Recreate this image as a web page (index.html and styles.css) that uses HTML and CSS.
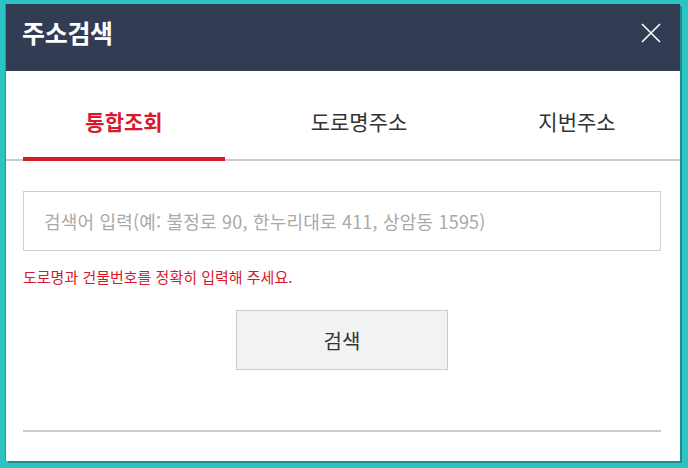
FILE: index.html
```html
<!DOCTYPE html>
<html lang="ko">
<head>
<meta charset="utf-8">
<title>주소검색</title>
<link rel="stylesheet" href="styles.css">
</head>
<body>
<div class="dialog">
  <div class="header">
    <h1 class="title">주소검색</h1>
    <button class="close" aria-label="닫기">
      <svg width="20" height="20" viewBox="0 0 20 20"><path d="M1 1 L19 19 M19 1 L1 19" stroke="#fff" stroke-width="1.6" fill="none"/></svg>
    </button>
  </div>
  <div class="tabs">
    <div class="tab tab-1 active">통합조회</div>
    <div class="tab tab-2">도로명주소</div>
    <div class="tab tab-3">지번주소</div>
  </div>
  <div class="content">
    <input class="search-input" type="text" placeholder="검색어 입력(예: 불정로 90, 한누리대로 411, 상암동 1595)">
    <p class="hint">도로명과 건물번호를 정확히 입력해 주세요.</p>
    <div class="actions">
      <button class="search-btn">검색</button>
    </div>
    <div class="divider"></div>
  </div>
</div>
</body>
</html>
```

FILE: styles.css
```css
html, body {
  margin: 0;
  padding: 0;
}
body {
  background: #2cc3c3;
  width: 688px;
  height: 468px;
  overflow: hidden;
  font-family: "Noto Sans CJK KR", "Noto Sans", sans-serif;
  padding: 4px 0 0 6px;
  box-sizing: border-box;
}
.dialog {
  width: 674px;
  height: 457px;
  background: #fff;
  box-shadow: -1px 0 0 #1f9c9c, 2px 2px 0 #1e8f8f;
}
.header {
  height: 67px;
  box-sizing: border-box;
  background: #323c53;
  display: flex;
  align-items: center;
  justify-content: space-between;
  padding: 0 19px 12px 16px;
}
.title {
  margin: 0;
  color: #fff;
  font-size: 25px;
  font-weight: 700;
  line-height: 30px;
  letter-spacing: -0.3px;
}
.close {
  background: none;
  border: 0;
  padding: 0;
  width: 20px;
  height: 20px;
  display: block;
  margin-top: 3px;
}
.close svg {
  display: block;
}
.tabs {
  display: grid;
  grid-template-columns: 202px 268px 1fr;
  padding: 0 19px 0 17px;
  border-bottom: 2px solid #cccccc;
  height: 88px;
  align-items: start;
}
.tab {
  height: 88px;
  box-sizing: border-box;
  padding-top: 35px;
  text-align: center;
  font-size: 21px;
  line-height: 30px;
  color: #333;
}
.tab.active {
  color: #d8192b;
  font-weight: 700;
  height: 90px;
  border-bottom: 4px solid #d8192b;
}
.content {
  padding: 30px 19px 0 17px;
}
.search-input {
  display: block;
  width: 100%;
  height: 60px;
  box-sizing: border-box;
  border: 1px solid #cfcfcf;
  padding: 0 20px;
  font-family: "Noto Sans CJK KR", "Noto Sans", sans-serif;
  font-size: 18px;
  letter-spacing: 0.2px;
  color: #333;
  outline: none;
}
.search-input::placeholder {
  color: #a9a9a9;
}
.hint {
  margin: 16px 0 0;
  font-size: 15px;
  line-height: 20px;
  color: #d8192b;
  letter-spacing: 0;
}
.actions {
  display: flex;
  justify-content: center;
  margin-top: 23px;
}
.search-btn {
  width: 212px;
  height: 60px;
  background: #f1f2f4;
  border: 1px solid #cccccc;
  font-family: "Noto Sans CJK KR", "Noto Sans", sans-serif;
  font-size: 20px;
  color: #333;
  padding: 0;
}
.divider {
  margin-top: 60px;
  height: 2px;
  background: #cccccc;
}
```
